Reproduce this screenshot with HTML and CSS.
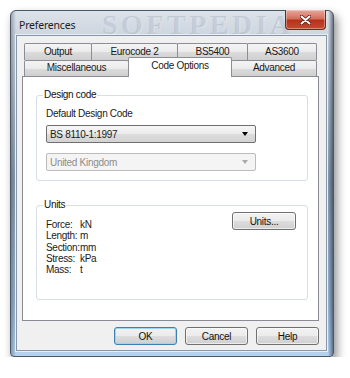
FILE: index.html
```html
<!DOCTYPE html>
<html lang="en">
<head>
  <meta charset="UTF-8"/>
  <title>Preferences</title>
  <link rel="stylesheet" href="styles.css">
</head>
<body>
<div class="window">
  <div class="titlebar">
    <span class="title">Preferences</span>
    <span class="watermark">SOFTPEDIA</span>
    <button class="close" aria-label="Close">
      <svg width="11" height="10" viewBox="0 0 11 10">
        <path d="M1.5 1.5 L9.5 8.5 M9.5 1.5 L1.5 8.5" stroke="#4a1010" stroke-width="3.4" stroke-linecap="round"/>
        <path d="M1.5 1.5 L9.5 8.5 M9.5 1.5 L1.5 8.5" stroke="#fff" stroke-width="2" stroke-linecap="round"/>
      </svg>
    </button>
  </div>

  <div class="client">
    <div class="tabs">
      <div class="tab-row">
        <div class="tab w-output">Output</div>
        <div class="tab w-euro">Eurocode 2</div>
        <div class="tab w-bs">BS5400</div>
        <div class="tab w-as">AS3600</div>
      </div>
      <div class="tab-row">
        <div class="tab w-misc">Miscellaneous</div>
        <div class="tab w-code active">Code Options</div>
        <div class="tab w-adv">Advanced</div>
      </div>
    </div>

    <div class="panel">
      <fieldset class="group design">
        <legend>Design code</legend>
        <div class="label">Default Design Code</div>
        <div class="combo">
          <span>BS 8110-1:1997</span>
          <span class="arrow"></span>
        </div>
        <div class="combo disabled">
          <span>United Kingdom</span>
          <span class="arrow"></span>
        </div>
      </fieldset>

      <fieldset class="group units">
        <legend>Units</legend>
        <div class="unit-list">
          <div class="unit"><span class="name">Force:</span><span>kN</span></div>
          <div class="unit"><span class="name">Length: </span><span>m</span></div>
          <div class="unit"><span class="name">Section:</span><span>mm</span></div>
          <div class="unit"><span class="name">Stress:</span><span>kPa</span></div>
          <div class="unit"><span class="name">Mass:</span><span>t</span></div>
        </div>
        <button class="btn units-btn">Units...</button>
      </fieldset>
    </div>

    <div class="buttons">
      <button class="btn default">OK</button>
      <button class="btn">Cancel</button>
      <button class="btn">Help</button>
    </div>
  </div>
</div>
</body>
</html>
```

FILE: styles.css
```css
body {
    margin: 0;
    background: #ffffff;
    font-family: "Liberation Sans", Arial, sans-serif;
    font-size: 10px;
    letter-spacing: -0.3px;
    color: #1a1a1a;
}

.window {
    position: relative;
    box-sizing: border-box;
    width: 324px;
    height: 347px;
    margin: 10px 0 0 10px;
    padding: 0 6px 5px 5px;
    border: 1px solid #4b5866;
    border-radius: 6px 6px 4px 4px;
    background:
        linear-gradient(to right, rgba(40, 60, 80, 0.35) 0, rgba(40, 60, 80, 0) 5px, rgba(0, 0, 0, 0) 317px, rgba(20, 35, 55, 0.55) 322px),
        linear-gradient(to bottom, #dce2e9 0, #c9d2dc 30px, #8a9cb0 50%, #9cb6d2 85%, #b5d2ee 100%);
    box-shadow: 3px 5px 10px rgba(0, 0, 0, 0.45);
    display: flex;
    flex-direction: column;
}

.titlebar {
    position: relative;
    height: 25px;
    display: flex;
    align-items: center;
    padding: 3px 0 0 3px;
    box-sizing: border-box;
}

.title {
    font-family: "Noto Sans", "Open Sans", sans-serif;
    font-size: 10.5px;
    letter-spacing: -0.2px;
    color: #1c1c1c;
    position: relative;
    z-index: 1;
}

.watermark {
    position: absolute;
    left: 86px;
    top: 1px;
    font-family: "Liberation Serif", serif;
    font-size: 28px;
    font-weight: bold;
    letter-spacing: 3.5px;
    color: rgba(110, 130, 160, 0.22);
    text-shadow: 1px 1px 0 rgba(255, 255, 255, 0.25);
    line-height: 26px;
}

.close {
    position: absolute;
    top: -1px;
    right: 1px;
    width: 41px;
    height: 20px;
    padding: 0;
    border: 1px solid #6b2a20;
    border-top: none;
    border-radius: 0 0 4px 4px;
    background: linear-gradient(to bottom, #e8a89a 0, #d2705c 45%, #b6321c 55%, #c8492f 100%);
    box-shadow: inset 0 0 0 1px rgba(255, 255, 255, 0.35);
    display: flex;
    align-items: center;
    justify-content: center;
}

.client {
    flex: 1;
    background: #f0f0f0;
    border: 1px solid #8796a8;
    padding: 7px 7px 5px 5px;
    display: flex;
    flex-direction: column;
    box-shadow: 0 0 0 1px #e8eef5;
}

.tabs {
    display: flex;
    flex-direction: column;
    padding: 0 2px;
}

.tab-row {
    display: flex;
}

.tab {
    box-sizing: border-box;
    height: 17px;
    line-height: 15px;
    text-align: center;
    border: 1px solid #8c8e94;
    border-bottom: none;
    border-radius: 2px 2px 0 0;
    background: linear-gradient(to bottom, #f4f4f4 0, #ebebeb 50%, #dcdcdc 51%, #cfcfcf 100%);
    margin-right: -1px;
}

.tab-row + .tab-row .tab {
    height: 16px;
    line-height: 14px;
}

.tab.active {
    height: 20px !important;
    margin-top: -3px;
    margin-bottom: -1px;
    background: #ffffff;
    position: relative;
    z-index: 1;
    line-height: 16px !important;
}

.w-output { width: 68px; }
.w-euro { width: 87px; }
.w-bs { width: 71px; }
.w-as { width: 70px; }
.w-misc { width: 105px; }
.w-code { width: 104px; }
.w-adv { width: 86px; }

.panel {
    box-sizing: border-box;
    height: 245px;
    background: #ffffff;
    border: 1px solid #898c95;
    padding: 12px 10px 0 13px;
}

.group {
    position: relative;
    margin: 0;
    border: 1px solid #d5dfe5;
    border-radius: 3px;
    padding: 0 0 0 9px;
}

.group legend {
    padding: 0 1px;
    margin-left: -3px;
    line-height: 12px;
    color: #111111;
}

.design {
    height: 90px;
}

.label {
    margin-top: 7px;
    line-height: 12px;
}

.combo {
    box-sizing: border-box;
    width: 210px;
    height: 18px;
    margin-top: 5px;
    padding: 0 7px 0 3px;
    border: 1px solid #707070;
    border-radius: 2px;
    background: linear-gradient(to bottom, #f6f6f6 0, #ebebeb 50%, #dddddd 51%, #d3d3d3 100%);
    display: flex;
    align-items: center;
    justify-content: space-between;
}

.combo + .combo {
    margin-top: 10px;
}

.arrow {
    width: 0;
    height: 0;
    border-left: 3.5px solid transparent;
    border-right: 3.5px solid transparent;
    border-top: 4px solid #000000;
}

.combo.disabled {
    border-color: #bcbcbc;
    background: #f4f4f4;
    color: #8d8d8d;
}

.combo.disabled .arrow {
    border-top-color: #a9a9a9;
}

.units {
    margin-top: 18px;
    height: 99px;
    display: flex;
    align-items: flex-start;
    justify-content: space-between;
    padding-right: 11px;
}

.unit-list {
    margin-top: 8px;
}

.unit {
    display: flex;
    line-height: 11.3px;
    white-space: pre;
}

.unit .name {
    min-width: 34px;
}

.btn {
    box-sizing: border-box;
    font-family: "Liberation Sans", Arial, sans-serif;
    font-size: 10px;
    letter-spacing: -0.3px;
    color: #111111;
    height: 18px;
    padding: 0;
    border: 1px solid #707070;
    border-radius: 3px;
    background: linear-gradient(to bottom, #f2f2f2 0, #ebebeb 50%, #dddddd 51%, #cfcfcf 100%);
    box-shadow: inset 0 0 0 1px rgba(255, 255, 255, 0.6);
}

.units-btn {
    width: 64px;
    margin-top: 1px;
}

.buttons {
    display: flex;
    justify-content: flex-end;
    gap: 8px;
    margin-top: 6px;
}

.buttons .btn {
    width: 63px;
}

.btn.default {
    border-color: #3c7fb1;
    box-shadow: inset 0 0 0 1px #9ad6f0;
}
```
